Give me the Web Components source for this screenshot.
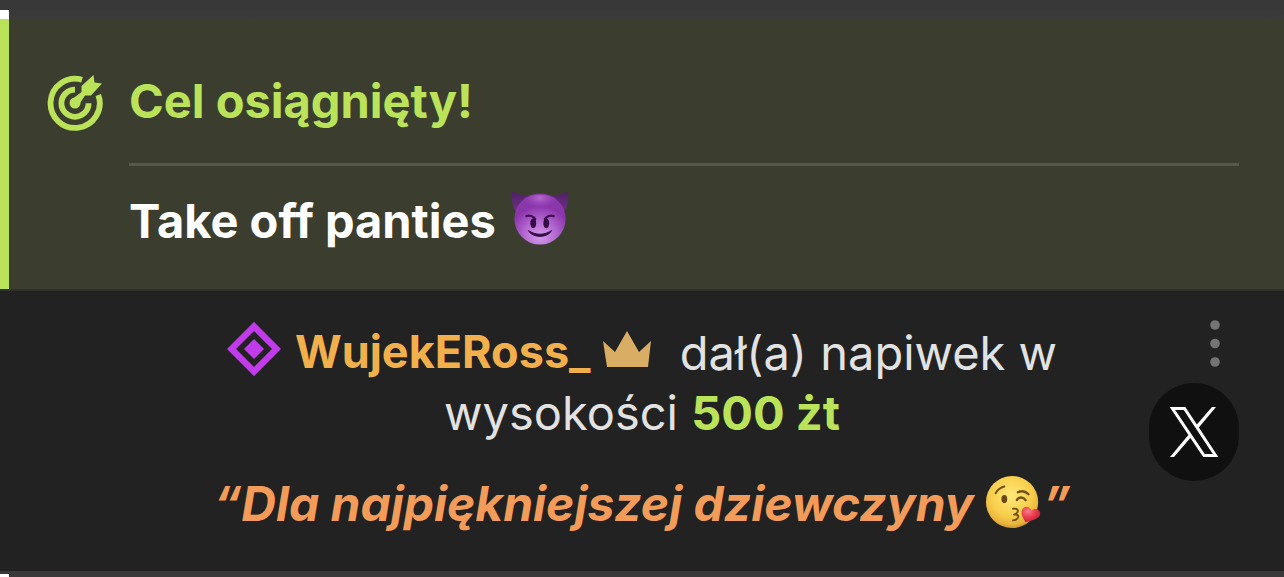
<!DOCTYPE html>
<html lang="pl">
<head>
<meta charset="utf-8">
<title>Czat</title>
<style>
body{margin:0;background:#222;font-family:Inter,"Liberation Sans",sans-serif;font-size:47px;line-height:60px;color:#e2e2e2}
</style>
</head>
<body>
<chat-feed>
  <feed-gap></feed-gap>
  <goal-card heading="Cel osiągnięty!">Take off panties <emoji-icon name="devil"></emoji-icon></goal-card>
  <tip-message>
    <user-name slot="user" href="#WujekERoss_">WujekERoss_</user-name>
    <span slot="text">dał(a) napiwek w wysokości</span>
    <span slot="amount">500 żt</span>
    <span slot="quote">“Dla najpiękniejszej dziewczyny <emoji-icon name="kiss"></emoji-icon>”</span>
  </tip-message>
  <feed-gap end></feed-gap>
</chat-feed>
<script>
function define(name, html, setup) {
  const template = document.createElement('template');
  template.innerHTML = html;
  customElements.define(name, class extends HTMLElement {
    constructor() {
      super();
      this.attachShadow({mode: 'open'}).append(template.content.cloneNode(true));
    }
    connectedCallback() { if (setup) setup(this, this.shadowRoot); }
  });
}

define('chat-feed', `
<style>:host{display:flex;flex-direction:column}</style>
<slot></slot>`);

define('feed-gap', `
<style>
:host{display:flex;align-items:flex-end;height:19px;background:linear-gradient(#383838 50%,#3b3b3b)}
i{width:9px;height:9px;background:#fff}
:host([end]){height:6px;background:#3a3838}
:host([end]) i{height:3px}
</style><i></i>`);

const emoji = {
devil: ['😈', `<svg viewBox="0 0 60 60"><defs>
<radialGradient id="f" cx=".5" cy=".84" r=".85"><stop offset="0" stop-color="#d49aed"/><stop offset=".35" stop-color="#b56bd2"/><stop offset=".7" stop-color="#8b35ac"/><stop offset="1" stop-color="#8a3aaa"/></radialGradient>
<radialGradient id="t" cx=".5" cy=".12" r=".4"><stop offset="0" stop-color="#b56ace"/><stop offset="1" stop-color="#a050bd" stop-opacity="0"/></radialGradient>
<linearGradient id="h" y2="1" x2="0"><stop stop-color="#4c2160"/><stop offset="1" stop-color="#743090"/></linearGradient></defs>
<path d="M1 1c6 4 13 4 20 5L6 24C2 18 0 10 1 1zM59 1c-6 4-13 4-20 5l15 18c4-6 6-14 5-23z" fill="url(#h)"/>
<circle cx="30" cy="30" r="26.500" fill="url(#f)"/><ellipse cx="30" cy="18" rx="21" ry="13" fill="url(#t)"/>
<path d="M16 27c3-1 7 0 9 3M44 27c-3-1-7 0-9 3" fill="none" stroke="#401052" stroke-width="2.500" stroke-linecap="round"/>
<ellipse cx="23" cy="34.500" rx="3" ry="5" fill="#360b48"/><ellipse cx="36.500" cy="34.500" rx="3" ry="5" fill="#360b48"/>
<path d="M18 42c7 5 17 5 24 0-4 8-20 8-24 0z" fill="#360b48" stroke="#360b48" stroke-linejoin="round"/></svg>`],
kiss: ['😘', `<svg viewBox="0 0 60 60"><defs>
<radialGradient id="f" cx=".48" cy=".38" r=".64"><stop offset="0" stop-color="#ffe878"/><stop offset=".6" stop-color="#f8cf4c"/><stop offset=".86" stop-color="#e9b43d"/><stop offset="1" stop-color="#c68b29"/></radialGradient>
<radialGradient id="r" cx=".35" cy=".3" r=".8"><stop offset="0" stop-color="#fa7c87"/><stop offset=".5" stop-color="#e83b4e"/><stop offset="1" stop-color="#bd1f33"/></radialGradient></defs>
<circle cx="28" cy="30" r="27" fill="url(#f)"/>
<path d="M11 21c2-4 5-6 9-7" fill="none" stroke="#755014" stroke-width="2" stroke-linecap="round"/>
<path d="M34 20c4-2 8-1 11 2M33 28c2-4 7-3 9 0" fill="none" stroke="#755014" stroke-width="2.400" stroke-linecap="round"/>
<path d="M29 37c6-1 7 4 1 6 6-1 6 5-1 6" fill="none" stroke="#755014" stroke-width="2" stroke-linecap="round" stroke-linejoin="round"/>
<ellipse cx="20" cy="27" rx="3" ry="4.200" fill="#6b4915"/>
<path d="M42 51c-3-5-6-10-3-14 3-4 8-2 9 2 3-3 8-2 9 2 1 6-8 8-15 10z" fill="url(#r)"/></svg>`]
};
define('emoji-icon', `
<style>:host{display:inline-block;width:58px;height:48px}
span{display:block}svg{display:block;width:58px;height:58px}</style><span role="img"></span>`,
(el, root) => {
  const [label, art] = emoji[el.getAttribute('name')];
  const box = root.querySelector('span');
  box.setAttribute('aria-label', label);
  box.innerHTML = art;
});

define('goal-card', `
<style>
:host{display:block;border-left:9px solid #bbe35a;background:#3b3e2f}
article{display:grid;grid-template-columns:56px 1fr;column-gap:26px;padding:52px 45px 38px 38px}
svg{display:block;width:56px;height:56px;margin-top:4px}
h2{margin:0;padding-bottom:32px;border-bottom:3px solid #57594a;font-size:inherit;font-weight:700;color:#bbe35a}
p{margin:0;padding-top:24px;grid-column:2;font-weight:700;color:#fff}
::slotted(emoji-icon){margin-left:4px}
</style>
<article>
<svg viewBox="0 0 56 56" aria-hidden="true"><g fill="none" stroke="#bbe35a" stroke-width="5.800">
<path d="M35 4.700A24.600 24.600 0 1 0 51.300 20"/><path d="M28 14.600A13.600 13.600 0 1 0 41.600 28.200"/></g>
<path d="M24 25L34.500 17V11L46.500 0l1 7.500 7.500 1L44 20.500h-6L31 31z" fill="#bbe35a"/><circle cx="28" cy="28" r="5.500" fill="#bbe35a"/></svg>
<h2></h2><p><slot></slot></p>
</article>`,
(el, root) => { root.querySelector('h2').textContent = el.getAttribute('heading'); });

define('user-name', `
<style>
:host{display:inline}
a{color:#f2b04c;font-weight:700;font-size:45px;text-decoration:none;vertical-align:2px}
svg{display:inline-block}
.rank{width:54px;height:54px;margin-right:14px;vertical-align:-8px}
.crown{width:48px;height:36px;margin:0 16px 0 12px;vertical-align:1px}
</style><a><svg class="rank" viewBox="0 0 54 54" aria-hidden="true"><path d="M27 4.500L49.500 27 27 49.500 4.500 27z" fill="none" stroke="#c13bea" stroke-width="6.500"/><path d="M27 17l10 10-10 10-10-10z" fill="#c13bea"/></svg><slot></slot><svg class="crown" viewBox="0 0 48 36" aria-hidden="true"><path d="M0 10l12 11L24 0l12 21 12-11-3 26H4z" fill="#d9ad63"/></svg></a>`,
(el, root) => { root.querySelector('a').href = el.getAttribute('href'); });

define('tip-message', `
<style>
:host{display:grid;grid-template-columns:90px minmax(0,860px) 90px;justify-content:space-between;padding:29px 45px 37px;border-top:2px solid #303030;background:#222}
.body{grid-column:2;padding-top:2px;text-align:center}
p{margin:0}
.amount{font-weight:700;color:#bbe35a}
.quote{margin-top:30px;font-size:48px;font-weight:700;font-style:italic;color:#f39b58;white-space:nowrap}
.tools{display:flex;flex-direction:column;gap:15px;align-items:flex-end}
button{display:flex;align-items:center;justify-content:center;padding:0;border:0;background:none;color:#fff}
.menu{width:48px;height:48px}
.share{width:90px;height:98px;border-radius:45px;background:#101010}
svg{display:block}
</style>
<div class="body">
<p><slot name="user"></slot> <slot name="text"></slot> <span class="amount"><slot name="amount"></slot></span></p>
<p class="quote"><slot name="quote"></slot></p>
</div>
<div class="tools">
<button class="menu" type="button" aria-label="Menu"><svg width="48" height="48" viewBox="0 0 48 48" fill="#747474"><circle cx="24" cy="5" r="4.800"/><circle cx="24" cy="23.500" r="4.800"/><circle cx="24" cy="42" r="4.800"/></svg></button>
<button class="share" type="button" aria-label="X"><svg width="48" height="50" viewBox="0 0 48 50"><path d="M2.500 1.500h12L45.500 48.500H34z" fill="none" stroke="#fff" stroke-width="3"/><path d="M42 0h4L28 21.500l-2-3zM0 50h4l18-21-2-3z" fill="#fff"/></svg></button>
</div>`);
</script>
</body>
</html>
